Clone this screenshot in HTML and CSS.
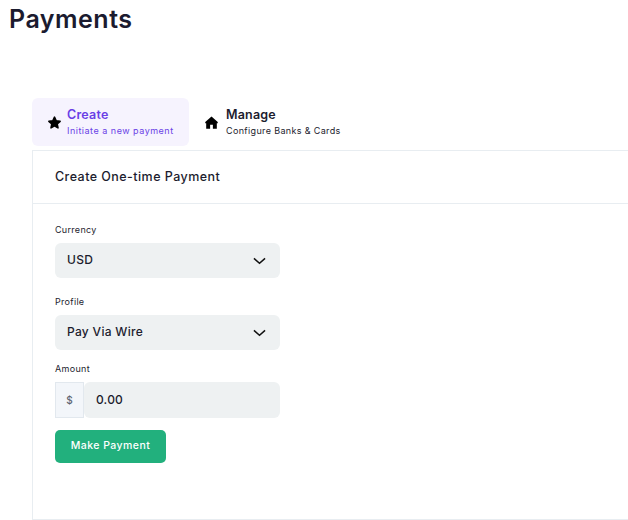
FILE: index.html
```html
<!DOCTYPE html>
<html lang="en">
<head>
<meta charset="utf-8">
<title>Payments</title>
<link rel="stylesheet" href="styles.css">
</head>
<body>
<h1 class="title">Payments</h1>
<main class="content">
  <nav class="tabs">
    <a class="tab tab-active">
      <svg class="tab-icon icon-star" viewBox="0 0 24 24"><path d="M12 3.5l2.7 5.8 6.3.8-4.7 4.3 1.3 6.2L12 17.4l-5.6 3.2 1.3-6.2L3 10.1l6.3-.8z"/></svg>
      <span class="tab-text"><span class="tab-name">Create</span><span class="tab-sub">Initiate a new payment</span></span>
    </a>
    <a class="tab">
      <svg class="tab-icon" viewBox="0 0 24 24"><path d="M12 2.5L2 11v2h1.5v9h6.3v-6.5h4.4V22h6.3v-9H22v-2z"/></svg>
      <span class="tab-text"><span class="tab-name">Manage</span><span class="tab-sub">Configure Banks &amp; Cards</span></span>
    </a>
  </nav>
  <section class="card">
    <header class="card-head">Create One-time Payment</header>
    <form class="form">
      <label class="label">Currency</label>
      <div class="select"><span>USD</span><svg class="chev" viewBox="0 0 14 8"><path d="M1 1.2l6 5.2 6-5.2"/></svg></div>
      <label class="label label-profile">Profile</label>
      <div class="select"><span>Pay Via Wire</span><svg class="chev" viewBox="0 0 14 8"><path d="M1 1.2l6 5.2 6-5.2"/></svg></div>
      <label class="label label-amount">Amount</label>
      <div class="amount"><span class="prefix">$</span><span class="amount-value">0.00</span></div>
      <button class="pay" type="button">Make Payment</button>
    </form>
  </section>
</main>
</body>
</html>
```
FILE: styles.css
```css
* { box-sizing: border-box; }
html, body { margin: 0; padding: 0; height: 520px; overflow: hidden; background: #fff; }
body { font-family: Inter, "Liberation Sans", sans-serif; color: #1c1c2e; }
.title { margin: 0; padding: 5px 0 0 9px; height: 98px; font-size: 25px; line-height: 29px; font-weight: 600; letter-spacing: 0.5px; color: #1b1b2f; }
.content { padding-left: 32px; width: 628px; overflow: hidden; }
.tabs { display: flex; height: 52px; align-items: flex-start; }
.tab { display: flex; align-items: center; height: 48px; width: 157px; padding: 0 15px; border-radius: 6px; gap: 5px; }
.tab-active { background: #f6f3fe; color: #6a3fe6; }
.tab-icon { width: 15px; height: 15px; fill: #000; flex: none; }
.icon-star { stroke: #000; stroke-width: 2.5; stroke-linejoin: round; }
.tab-text { display: flex; flex-direction: column; }
.tab-name { font-size: 12.5px; line-height: 17px; font-weight: 600; letter-spacing: 0.2px; margin-top: -1px; }
.tab-sub { font-size: 9px; line-height: 13px; margin-top: 1px; letter-spacing: 0.5px; white-space: nowrap; }
.tab + .tab { padding-left: 15px; width: auto; gap: 7px; }
.tab + .tab .tab-sub { letter-spacing: 0.35px; }
.card { border: 1px solid #e8edf1; border-right: 0; height: 370px; }
.card-head { height: 53px; padding: 0 22px 2px; display: flex; align-items: center; font-size: 12.5px; font-weight: 500; letter-spacing: 0.45px; border-bottom: 1px solid #e8edf1; }
.form { padding: 20px 22px; width: 247px; display: flex; flex-direction: column; align-items: stretch; }
.label { display: block; font-size: 9px; line-height: 12px; margin-bottom: 7px; letter-spacing: 0.3px; }
.label-profile { margin-top: 18px; }
.label-amount { margin-top: 13px; }
.select { display: flex; align-items: center; justify-content: space-between; height: 35px; width: 225px; padding: 0 13px 2px 12px; background: #eef1f2; border-radius: 6px; font-size: 12px; font-weight: 500; letter-spacing: 0.3px; }
.chev { width: 13px; height: 8px; fill: none; stroke: #111; stroke-width: 1.6; margin-top: 2px; margin-right: 1px; }
.amount { display: flex; height: 36px; width: 225px; }
.prefix { width: 29px; display: flex; align-items: center; justify-content: center; background: #f3f6fa; border: 1px solid #e2e8ee; font-size: 10px; font-weight: 500; color: #5c6470; }
.amount-value { flex: 1; display: flex; align-items: center; padding: 0 0 2px 12px; background: #eef1f2; border-radius: 6px; font-size: 12px; font-weight: 500; letter-spacing: 0.2px; }
.pay { margin-top: 12px; width: 111px; height: 33px; border: 0; border-radius: 5px; background: #22b07d; color: #fff; font-family: inherit; font-size: 10.5px; font-weight: 500; letter-spacing: 0.45px; padding: 0 0 2px; }
```
